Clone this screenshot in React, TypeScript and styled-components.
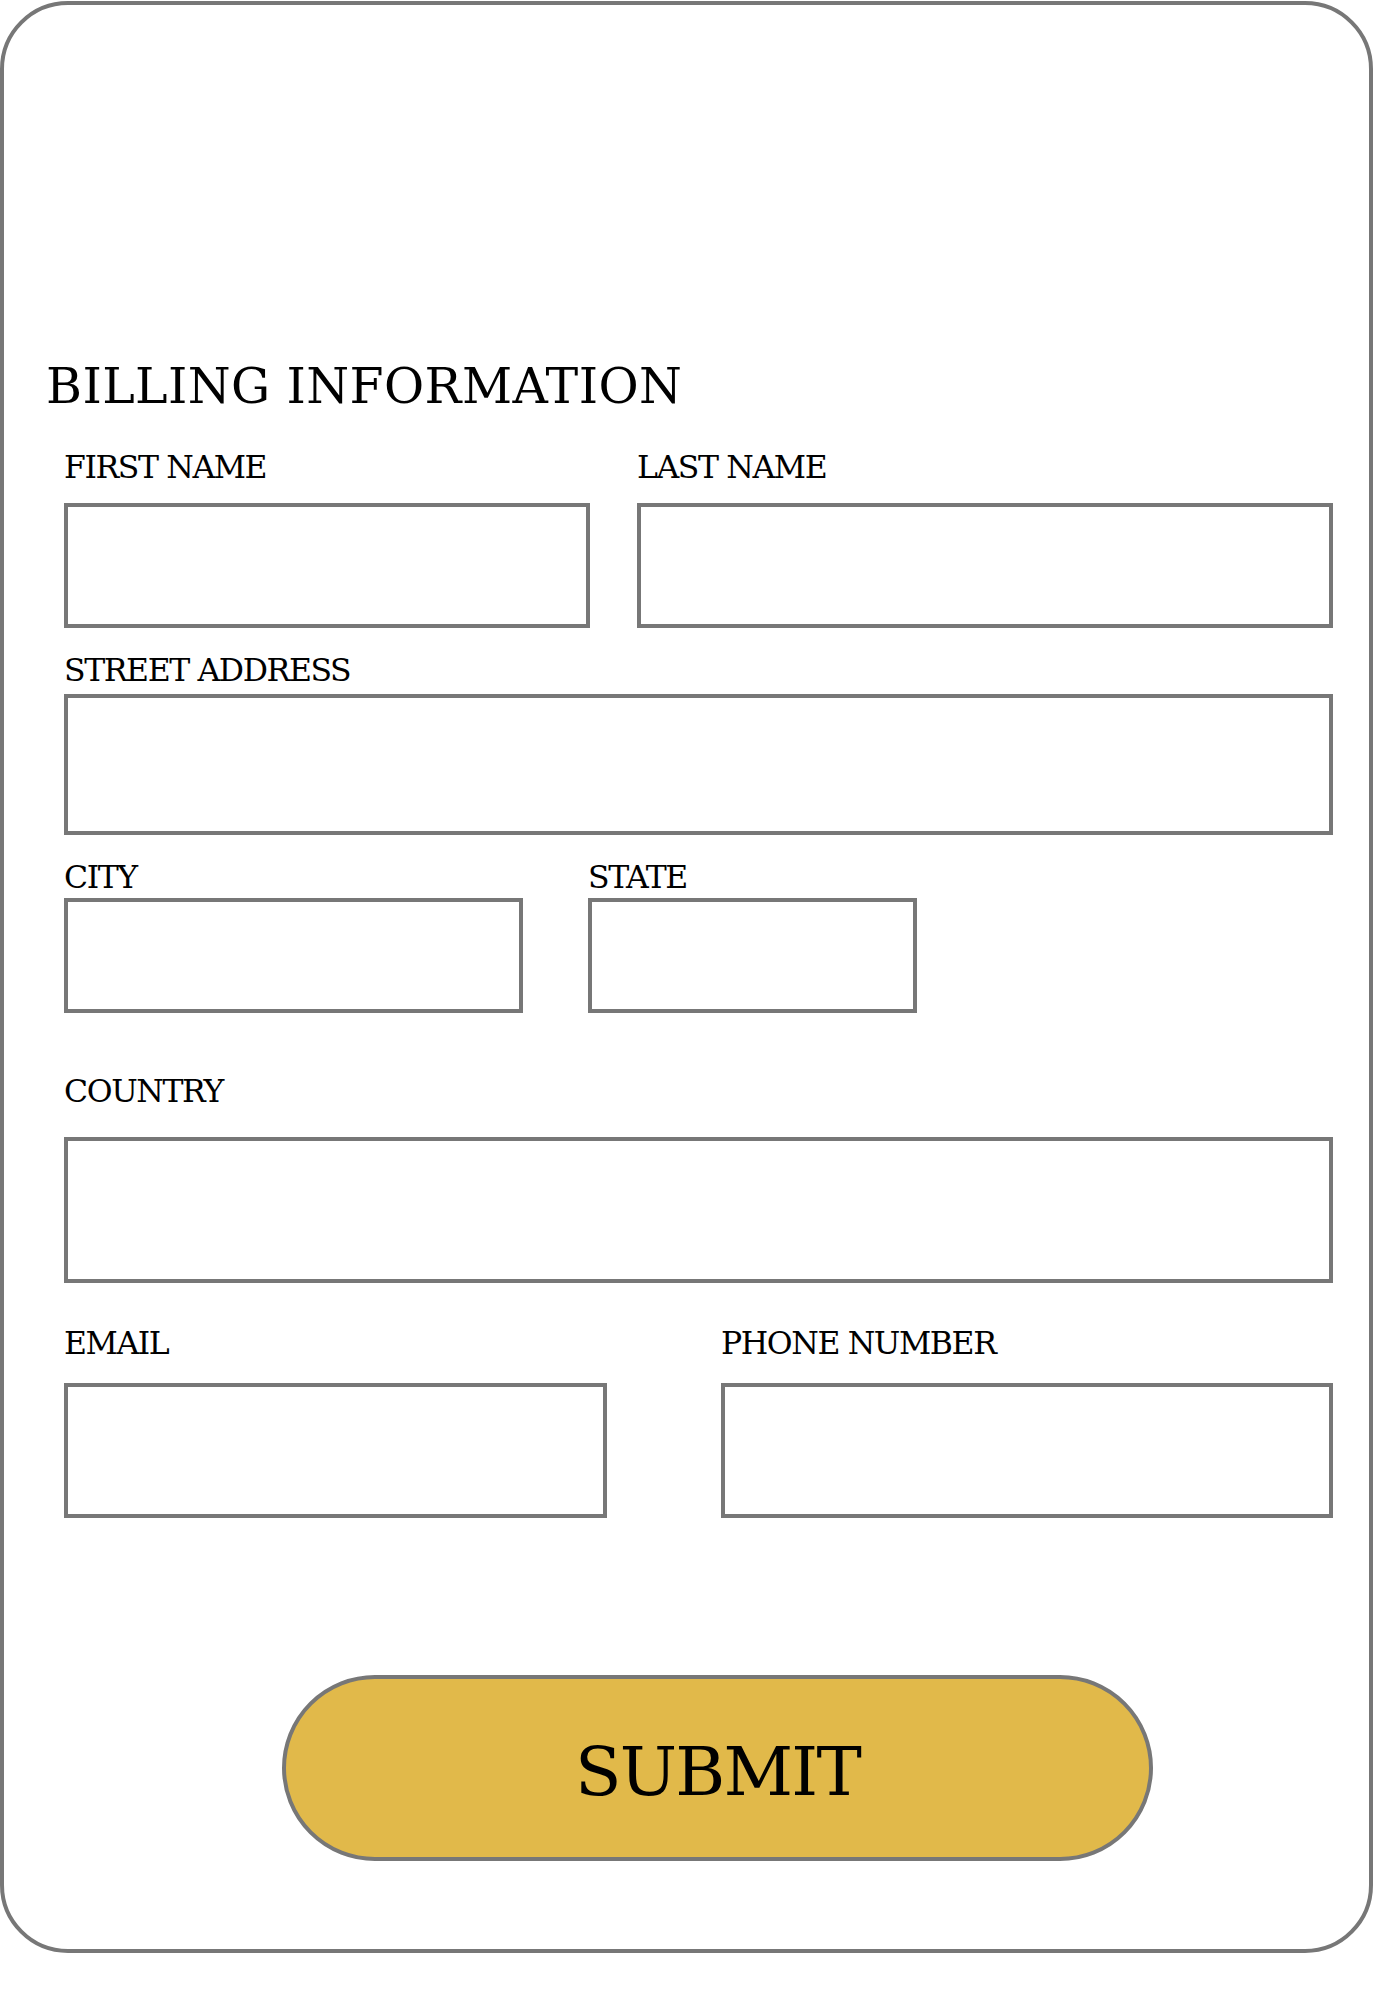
import styled, { createGlobalStyle } from 'styled-components';

const GlobalStyle = createGlobalStyle`
  html, body {
    margin: 0;
    padding: 0;
    background: #ffffff;
  }
  body {
    font-family: "DejaVu Serif", "Liberation Serif", serif;
    color: #000;
  }
`;

const Card = styled.form`
  box-sizing: border-box;
  margin: 1px 0 0 0;
  width: 1373px;
  height: 1952px;
  border: 4px solid #777777;
  border-radius: 68px;
  background: #ffffff;
  padding: 357px 36px 0 60px;
  display: flex;
  flex-direction: column;
`;

const Title = styled.h1`
  margin: 0 0 0 -18px;
  font-size: 49px;
  line-height: 49px;
  font-weight: 400;
  letter-spacing: 0.4px;
`;

const Row = styled.div<{ $columns: string; $gap: number; $top: number }>`
  display: grid;
  grid-template-columns: ${(p) => p.$columns};
  column-gap: ${(p) => p.$gap}px;
  margin-top: ${(p) => p.$top}px;
`;

const Field = styled.label<{ $space: number }>`
  display: flex;
  flex-direction: column;
  gap: ${(p) => p.$space}px;
`;

const Label = styled.span`
  font-size: 31.5px;
  line-height: 32px;
  letter-spacing: -1.4px;
  white-space: nowrap;
`;

const Input = styled.input<{ $height: number }>`
  box-sizing: border-box;
  display: block;
  width: 100%;
  height: ${(p) => p.$height}px;
  margin: 0;
  padding: 0 12px;
  border: 4px solid #777777;
  border-radius: 0;
  background: #ffffff;
  font-family: inherit;
  font-size: 28px;
  outline: none;
`;

const SubmitButton = styled.button`
  box-sizing: border-box;
  margin: 157px 0 0 218px;
  width: 871px;
  height: 186px;
  padding: 7px 0 0;
  border: 4px solid #777777;
  border-radius: 999px;
  background: #e1b94a;
  color: #000;
  font-family: inherit;
  font-size: 68px;
  line-height: 68px;
  letter-spacing: -1.8px;
  display: flex;
  align-items: center;
  justify-content: center;
  cursor: pointer;
`;

const App = () => {
  return (
    <>
      <GlobalStyle />
      <Card onSubmit={(e) => e.preventDefault()}>
        <Title>BILLING INFORMATION</Title>

        <Row $columns="526px 696px" $gap={47} $top={40}>
          <Field $space={20}>
            <Label>FIRST NAME</Label>
            <Input type="text" $height={125} />
          </Field>
          <Field $space={20}>
            <Label>LAST NAME</Label>
            <Input type="text" $height={125} />
          </Field>
        </Row>

        <Row $columns="1fr" $gap={0} $top={26}>
          <Field $space={8}>
            <Label>STREET ADDRESS</Label>
            <Input type="text" $height={141} />
          </Field>
        </Row>

        <Row $columns="459px 329px" $gap={65} $top={26}>
          <Field $space={5}>
            <Label>CITY</Label>
            <Input type="text" $height={115} />
          </Field>
          <Field $space={5}>
            <Label>STATE</Label>
            <Input type="text" $height={115} />
          </Field>
        </Row>

        <Row $columns="1fr" $gap={0} $top={62}>
          <Field $space={30}>
            <Label>COUNTRY</Label>
            <Input type="text" $height={146} />
          </Field>
        </Row>

        <Row $columns="543px 612px" $gap={114} $top={44}>
          <Field $space={24}>
            <Label>EMAIL</Label>
            <Input type="email" $height={135} />
          </Field>
          <Field $space={24}>
            <Label>PHONE NUMBER</Label>
            <Input type="tel" $height={135} />
          </Field>
        </Row>

        <SubmitButton type="submit">SUBMIT</SubmitButton>
      </Card>
    </>
  );
};

export default App;
